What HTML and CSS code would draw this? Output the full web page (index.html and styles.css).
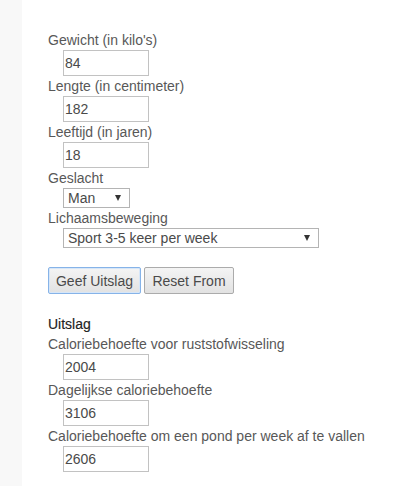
FILE: index.html
```html
<!DOCTYPE html>
<html lang="nl">
<head>
<meta charset="utf-8">
<title>Calorieberekening</title>
<link rel="stylesheet" href="styles.css">
</head>
<body>
<div class="page">
  <aside class="sidebar"></aside>
  <main class="content">
    <form class="form">
      <label class="label">Gewicht (in kilo's)</label>
      <input class="field" type="text" value="84">
      <label class="label">Lengte (in centimeter)</label>
      <input class="field" type="text" value="182">
      <label class="label">Leeftijd (in jaren)</label>
      <input class="field" type="text" value="18">
      <label class="label">Geslacht</label>
      <div class="select select-small"><span class="select-text">Man</span></div>
      <label class="label">Lichaamsbeweging</label>
      <div class="select select-wide"><span class="select-text">Sport 3-5 keer per week</span></div>
      <div class="buttons">
        <button type="button" class="btn btn-submit">Geef Uitslag</button>
        <button type="button" class="btn btn-reset">Reset From</button>
      </div>
      <h3 class="result-title">Uitslag</h3>
      <label class="label">Caloriebehoefte voor ruststofwisseling</label>
      <input class="field" type="text" value="2004">
      <label class="label">Dagelijkse caloriebehoefte</label>
      <input class="field" type="text" value="3106">
      <label class="label">Caloriebehoefte om een pond per week af te vallen</label>
      <input class="field" type="text" value="2606">
    </form>
  </main>
</div>
</body>
</html>
```

FILE: styles.css
```css
html, body {
  margin: 0;
  padding: 0;
  background: #ffffff;
}

body {
  font-family: "Liberation Sans", Arial, sans-serif;
  font-size: 14px;
  color: #555555;
}

.page {
  display: flex;
  min-height: 486px;
}

.sidebar {
  width: 22px;
  flex: 0 0 22px;
  background: #f8f8f8;
}

.content {
  flex: 1;
  padding: 30px 0 0 26px;
}

.form {
  display: flex;
  flex-direction: column;
  align-items: flex-start;
}

.label {
  display: block;
  line-height: 20px;
  height: 20px;
  color: #585858;
  white-space: nowrap;
}

.field {
  box-sizing: border-box;
  width: 86px;
  height: 26px;
  margin: 0 0 0 15px;
  padding: 0 1px;
  border: 1px solid #c2c2c2;
  border-radius: 0;
  font-family: "Liberation Sans", Arial, sans-serif;
  font-size: 14px;
  color: #4a4a4a;
  background: #ffffff;
  outline: none;
}

.select {
  position: relative;
  box-sizing: border-box;
  height: 20px;
  margin-left: 15px;
  border: 1px solid #b4b4b4;
  background: #ffffff;
  display: flex;
  align-items: center;
  padding-left: 4px;
  font-size: 14px;
  color: #4a4a4a;
}

.select::after {
  content: "";
  position: absolute;
  right: 8px;
  top: 6px;
  width: 0;
  height: 0;
  border-left: 3px solid transparent;
  border-right: 3px solid transparent;
  border-top: 6px solid #333333;
}

.select-small {
  width: 67px;
}

.select-wide {
  width: 256px;
}

.select-text {
  line-height: 18px;
}

.buttons {
  display: flex;
  gap: 3px;
  margin-top: 19px;
}

.btn {
  box-sizing: border-box;
  height: 27px;
  padding: 0;
  border: 1px solid #ababab;
  border-radius: 2px;
  background: linear-gradient(#f4f4f4, #e2e2e2);
  font-family: "Liberation Sans", Arial, sans-serif;
  font-size: 14px;
  color: #4a4a4a;
  text-align: center;
}

.btn-submit {
  width: 93px;
  border-color: #86b3e8;
  box-shadow: 0 0 0 1px #d6e6f8 inset;
}

.btn-reset {
  width: 90px;
}

.result-title {
  margin: 20px 0 0 0;
  font-size: 14px;
  font-weight: normal;
  line-height: 20px;
  color: #222222;
  -webkit-text-stroke: 0.15px #222222;
}
```
